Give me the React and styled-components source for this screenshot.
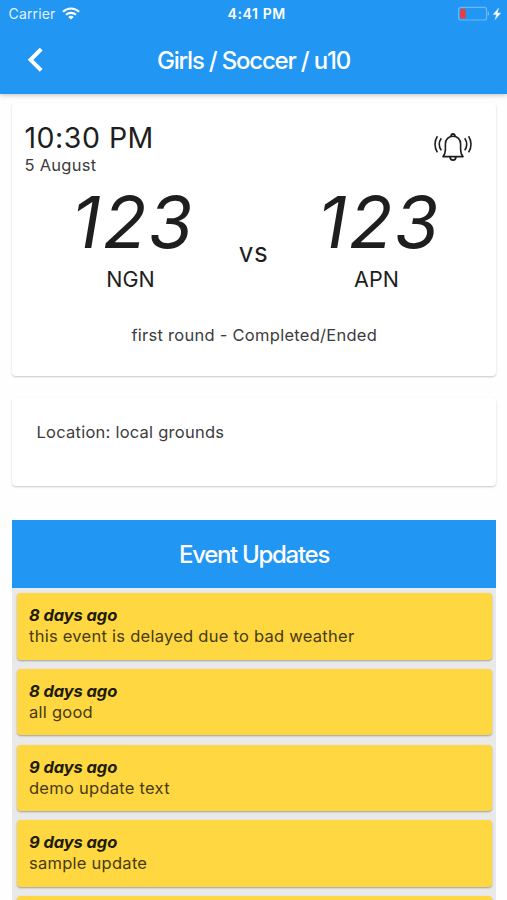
import React from "react";
import styled, { createGlobalStyle } from "styled-components";

const updates = [
  { id: 1, when: "8 days ago", text: "this event is delayed due to bad weather" },
  { id: 2, when: "8 days ago", text: "all good" },
  { id: 3, when: "9 days ago", text: "demo update text" },
  { id: 4, when: "9 days ago", text: "sample update" },
  { id: 5 },
];

function WifiIcon() {
  return (
    <svg width="18" height="13" viewBox="0 0 18 13" fill="none" stroke="#fff" strokeWidth="2.1">
      <path d="M1 4.7C5.5 0.4 12.5 0.4 17 4.7" />
      <path d="M4 7.8C6.8 5.2 11.2 5.2 14 7.8" />
      <path d="M9 12.6L6.3 9.9C7.8 8.5 10.2 8.5 11.7 9.9Z" fill="#fff" stroke="none" />
    </svg>
  );
}

function BatteryIcon() {
  return (
    <svg width="44" height="16" viewBox="0 0 44 16" fill="none">
      <rect x="0.6" y="1.4" width="28" height="12.6" rx="2.6" stroke="#6db8f7" strokeWidth="1.1" />
      <rect x="2.2" y="3" width="5.4" height="9.4" rx="1" fill="#ef3b3a" />
      <path d="M29.8 5.6C31.5 6.1 31.5 9.5 29.8 10Z" fill="#7cc0f8" />
      <path d="M40.6 2.2L35.2 8.6H38.5L37.2 13.6L42.6 7H39.3Z" fill="#fff" stroke="#fff" strokeWidth="0.4" />
    </svg>
  );
}

function BackIcon() {
  return (
    <svg width="18" height="26" viewBox="0 0 18 26" fill="none" stroke="#fff" strokeWidth="4">
      <path d="M15.2 2.2L4.6 12.8L15.2 23.4" />
    </svg>
  );
}

function BellIcon() {
  return (
    <svg width="38" height="30" viewBox="0 0 38 30" fill="none" stroke="#1e1e1e" strokeWidth="1.6">
      <path d="M9 24.6C11.2 22.2 11.4 20.5 11.4 17V12C11.4 7.4 14.6 4.2 19 4.2S26.6 7.4 26.6 12V17C26.6 20.5 26.8 22.2 29 24.6Z" strokeLinejoin="round" />
      <path d="M17.1 4.3C16.4 1.2 21.6 1.2 20.9 4.3" strokeWidth="1.8" />
      <path d="M16.1 25C16.3 29.2 21.7 29.2 21.9 25" strokeWidth="1.8" />
      <path d="M3.4 4.2C0.2 9 0.2 15.6 3.4 20.4" />
      <path d="M7.3 6.2C4.7 10 4.7 14.6 7.3 18.4" />
      <path d="M34.6 4.2C37.8 9 37.8 15.6 34.6 20.4" />
      <path d="M30.7 6.2C33.3 10 33.3 14.6 30.7 18.4" />
    </svg>
  );
}

function App() {
  return (
    <Container>
      <GlobalStyle />
      <Header>
        <StatusBar>
          <Carrier>
            Carrier
            <WifiIcon />
          </Carrier>
          <Clock>4:41 PM</Clock>
          <Battery>
            <BatteryIcon />
          </Battery>
        </StatusBar>
        <NavBar>
          <BackButton aria-label="Back">
            <BackIcon />
          </BackButton>
          <Title>Girls / Soccer / u10</Title>
        </NavBar>
      </Header>

      <Main>
        <MatchCard>
          <MatchTop>
            <div>
              <Time>10:30 PM</Time>
              <Day>5 August</Day>
            </div>
            <BellIcon />
          </MatchTop>
          <Scores>
            <Team>
              <Score>123</Score>
              <TeamName>NGN</TeamName>
            </Team>
            <Versus>vs</Versus>
            <Team>
              <Score>123</Score>
              <TeamName>APN</TeamName>
            </Team>
          </Scores>
          <Status>first round - Completed/Ended</Status>
        </MatchCard>

        <LocationCard>Location: local grounds</LocationCard>

        <Updates>
          <UpdatesTitle>Event Updates</UpdatesTitle>
          <UpdateList>
            {updates.map((item) => (
              <UpdateCard key={item.id}>
                {item.when && <When>{item.when}</When>}
                {item.text && <UpdateText>{item.text}</UpdateText>}
              </UpdateCard>
            ))}
          </UpdateList>
        </Updates>
      </Main>
    </Container>
  );
}

const GlobalStyle = createGlobalStyle`
  * {
    box-sizing: border-box;
  }

  body {
    margin: 0;
    background-color: #fefefe;
    color: #1e1e1e;
    font-family: Inter, "Liberation Sans", sans-serif;
  }

  svg {
    display: block;
    flex: none;
  }
`;

const Container = styled.div`
  width: 100%;
  height: 900px;
  overflow: hidden;
`;

const Header = styled.header`
  position: relative;
  height: 94px;
  background-color: #2196f3;
  color: #fff;
  box-shadow: 0 1px 5px rgba(0, 0, 0, 0.25);
`;

const StatusBar = styled.div`
  display: grid;
  grid-template-columns: 1fr auto 1fr;
  align-items: center;
  height: 27px;
  padding: 0 5px 0 8.5px;
`;

const Carrier = styled.div`
  display: flex;
  align-items: center;
  gap: 6.5px;
  font-size: 14px;
  letter-spacing: 0.15px;
  color: #e3f2fe;
`;

const Clock = styled.div`
  font-size: 14px;
  font-weight: 600;
  letter-spacing: 0.6px;
  padding-left: 3px;
`;

const Battery = styled.div`
  display: flex;
  justify-content: flex-end;
`;

const NavBar = styled.div`
  display: grid;
  grid-template-columns: 54px 1fr 54px;
  align-items: center;
  height: 66px;
`;

const BackButton = styled.button`
  padding: 0 0 0 26px;
  border: 0;
  background: none;
`;

const Title = styled.h1`
  margin: 0;
  font-size: 24px;
  font-weight: 500;
  letter-spacing: -1.2px;
  text-align: center;
`;

const Main = styled.main`
  padding: 9px 11px 0 12px;
`;

const Card = styled.section`
  background-color: #fff;
  border-radius: 4px;
  box-shadow: 0 1px 2px rgba(0, 0, 0, 0.22);
`;

const MatchCard = styled(Card)`
  height: 273px;
  padding: 17px 24px 0 12.5px;
`;

const MatchTop = styled.div`
  display: flex;
  justify-content: space-between;
  height: 68.4px;

  svg {
    margin-top: 12px;
  }
`;

const Time = styled.div`
  font-size: 28.5px;
  line-height: 35px;
  letter-spacing: 0.5px;
`;

const Day = styled.div`
  font-size: 16.5px;
  line-height: 20px;
  letter-spacing: 0.25px;
  color: #3c3c3c;
`;

const Scores = styled.div`
  display: grid;
  grid-template-columns: 206px 40px 206px;
  margin-left: 3px;
`;

const Team = styled.div`
  text-align: center;
`;

const Score = styled.div`
  padding-left: 5px;
  font-size: 72px;
  font-style: italic;
  line-height: 67px;
  letter-spacing: 1.7px;
`;

const TeamName = styled.div`
  font-size: 21.5px;
  line-height: 26px;
  margin-top: 10.6px;
`;

const Versus = styled.div`
  font-size: 26px;
  line-height: 30px;
  letter-spacing: 0.5px;
  margin-top: 49.6px;
  text-align: center;
`;

const Status = styled.div`
  margin: 32px -12px 0 0;
  font-size: 16.5px;
  line-height: 22px;
  letter-spacing: 0.27px;
  text-align: center;
  color: #3c3c3c;
`;

const LocationCard = styled(Card)`
  height: 88px;
  margin-top: 22px;
  padding: 23px 24.5px;
  font-size: 16.5px;
  line-height: 22px;
  letter-spacing: 0.24px;
  color: #3c3c3c;
`;

const Updates = styled.section`
  margin-top: 34px;
  background-color: #e9e9e9;
`;

const UpdatesTitle = styled.h2`
  display: flex;
  align-items: center;
  justify-content: center;
  height: 68px;
  margin: 0;
  background-color: #2196f3;
  color: #fff;
  font-size: 24px;
  font-weight: 500;
  letter-spacing: -1.3px;
`;

const UpdateList = styled.div`
  display: flex;
  flex-direction: column;
  gap: 9.5px;
  padding: 5.4px 4.5px;
`;

const UpdateCard = styled.article`
  height: 66.2px;
  padding: 12px 12.5px 0;
  background-color: #ffd740;
  border-radius: 4px;
  box-shadow: 0 1px 2px rgba(0, 0, 0, 0.32);
`;

const When = styled.div`
  font-size: 16.5px;
  font-style: italic;
  font-weight: 700;
  line-height: 21px;
  letter-spacing: -0.1px;
  color: #211c08;
`;

const UpdateText = styled.div`
  font-size: 16.5px;
  line-height: 21px;
  letter-spacing: 0.26px;
  color: #463b12;
`;

export default App;
